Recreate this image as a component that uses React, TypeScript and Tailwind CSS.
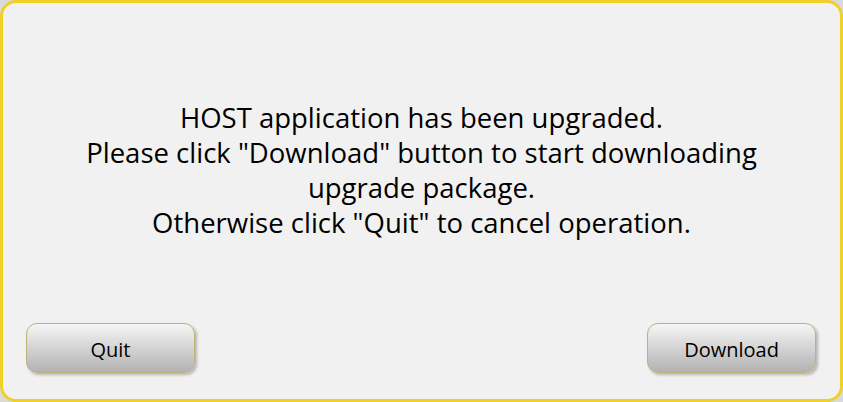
export default function App() {
  const font = { fontFamily: '"Open Sans", "Noto Sans", sans-serif' };
  return (
    <div className="w-[843px] h-[402px] bg-[#dadada]" style={font}>
      <div className="h-full rounded-[16px] border-[3px] border-[#f0d028] bg-[#f1f1f1] flex flex-col">
        <div className="flex-1 flex flex-col items-center pt-[97px] text-[27.5px] leading-[35px] text-black text-center">
          <span>HOST application has been upgraded.</span>
          <span>Please click "Download" button to start downloading</span>
          <span>upgrade package.</span>
          <span>Otherwise click "Quit" to cancel operation.</span>
        </div>
        <div className="flex justify-between pl-[23px] pr-[24px] pb-[26px]">
          <button className="w-[169px] h-[50px] pt-[3px] rounded-[11px] border border-[#bdb27a] bg-linear-to-b from-[#f6f6f6] to-[#b2b2b2] shadow-[2px_2px_3px_rgba(0,0,0,0.25)] text-[20px] text-black">
            Quit
          </button>
          <button className="w-[169px] h-[50px] pt-[3px] rounded-[11px] border border-[#bdb27a] bg-linear-to-b from-[#f6f6f6] to-[#b2b2b2] shadow-[2px_2px_3px_rgba(0,0,0,0.25)] text-[20px] text-black">
            Download
          </button>
        </div>
      </div>
    </div>
  );
}
